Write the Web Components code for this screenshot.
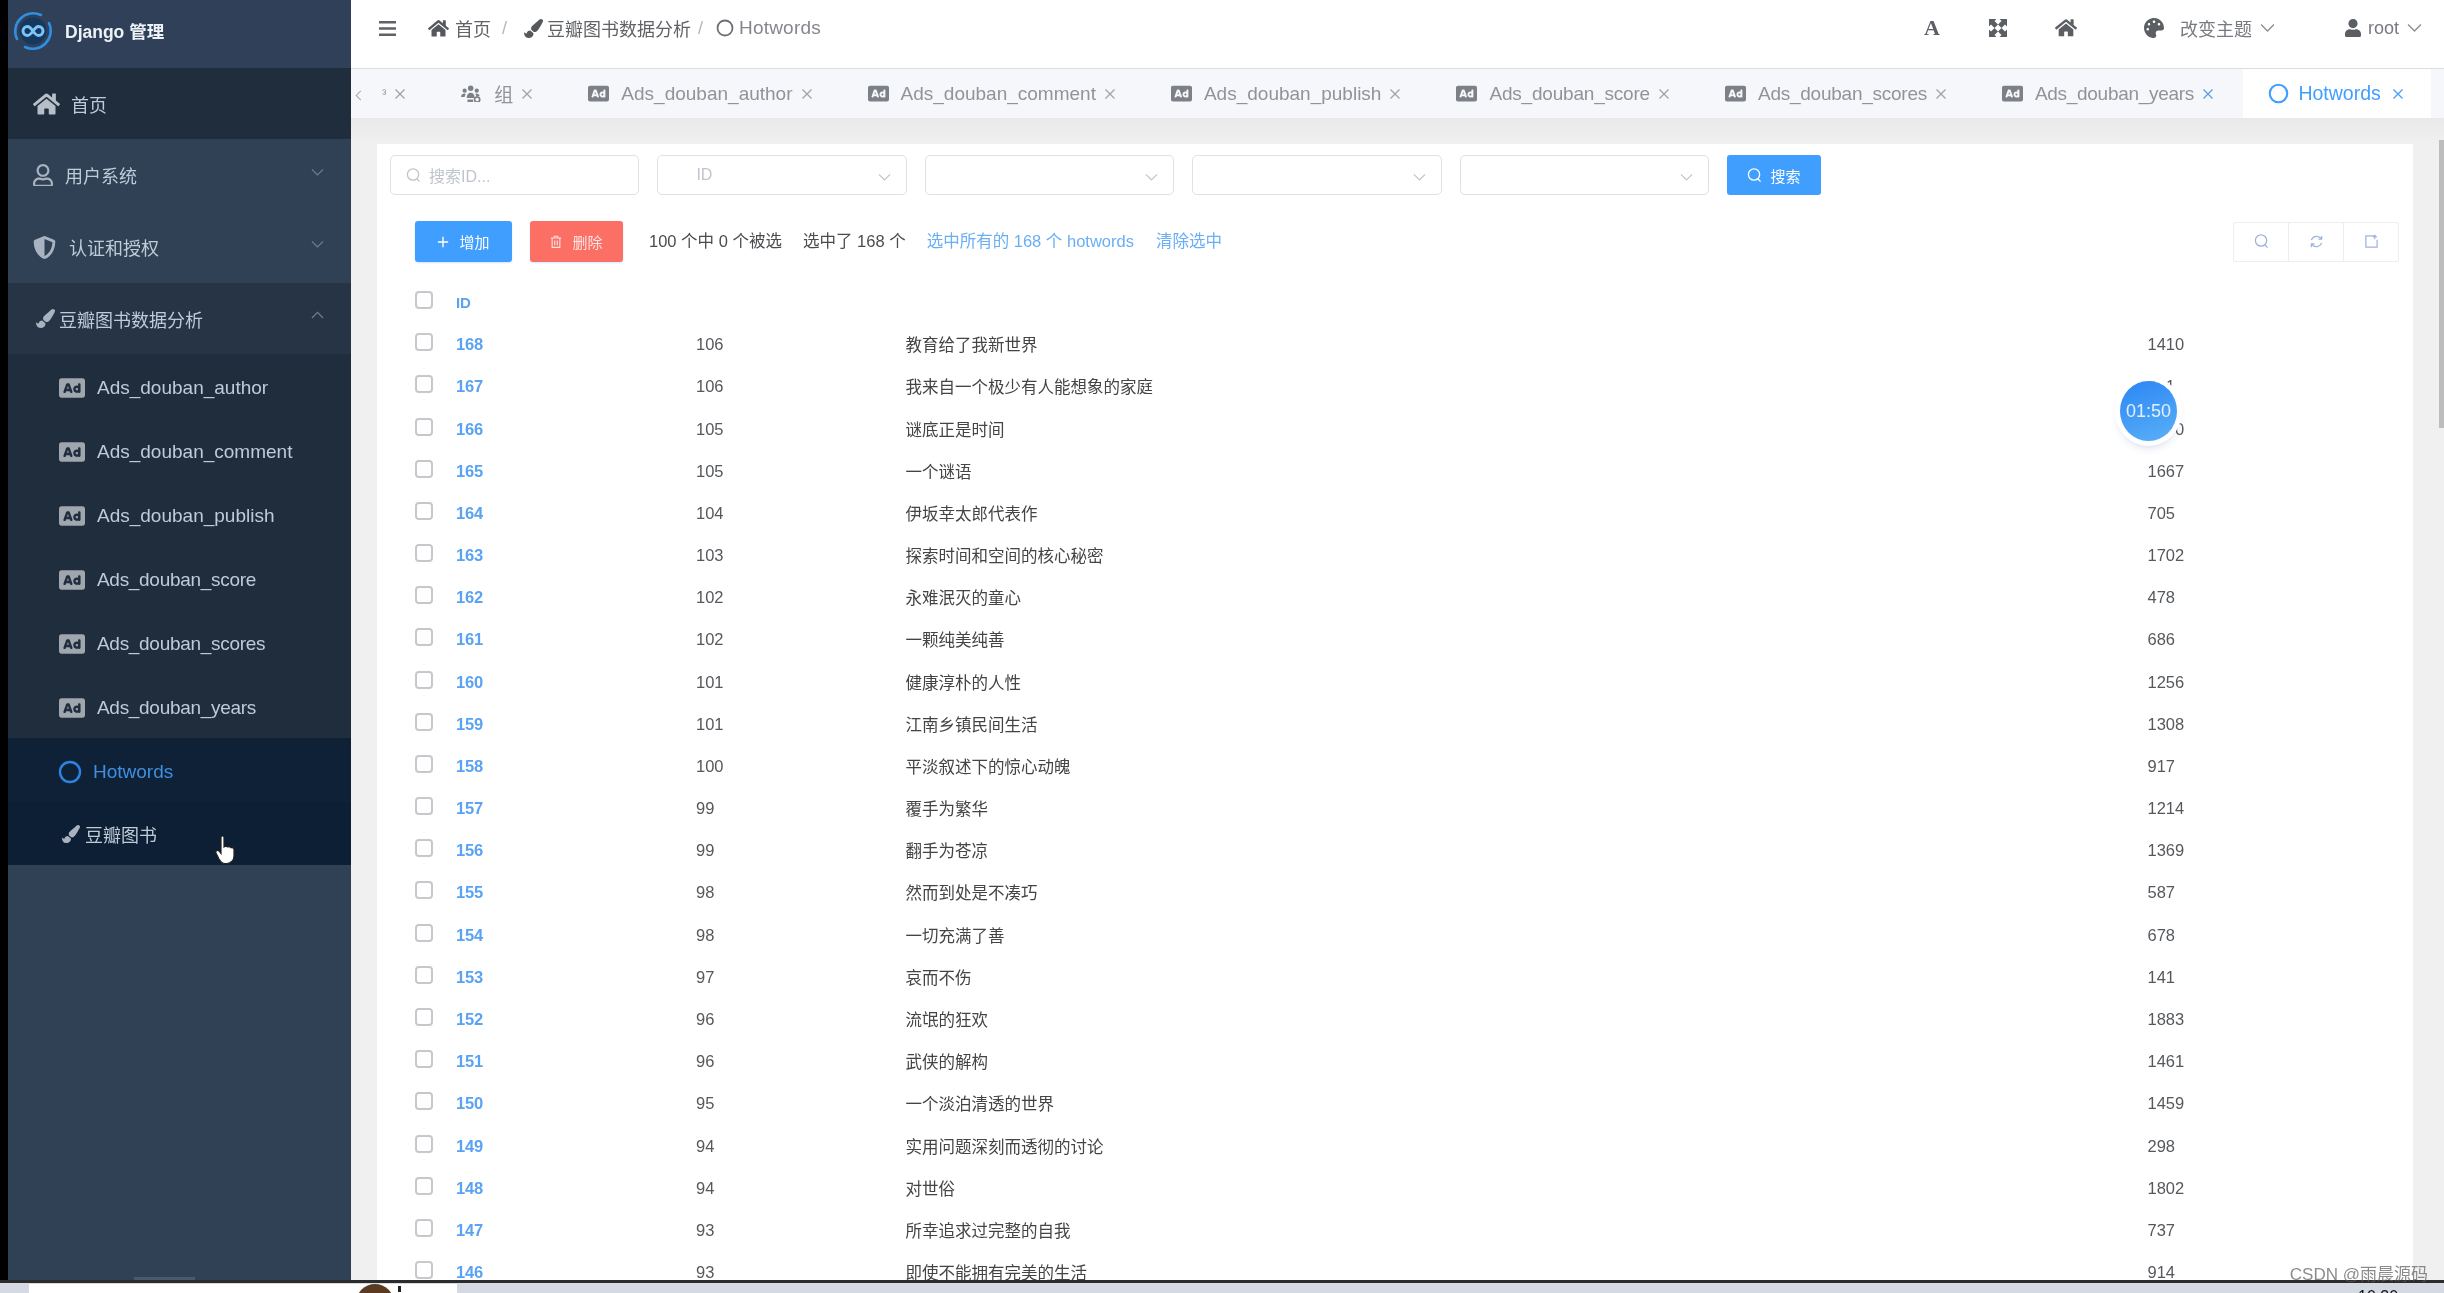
<!DOCTYPE html>
<html lang="zh">
<head>
<meta charset="utf-8">
<title>Hotwords | Django 管理</title>
<style>
  html, body { margin: 0; height: 100%; background: #d8dce4; overflow: hidden; }
  body { font-family: "Liberation Sans", "Noto Sans CJK SC", sans-serif; }
</style>
</head>
<body>
<admin-app></admin-app>

<script>
const ICONS = {
  home: ["0 0 576 512", `<path d="M280.37 148.26L96 300.11V464a16 16 0 0 0 16 16l112.06-.29a16 16 0 0 0 15.92-16V368a16 16 0 0 1 16-16h64a16 16 0 0 1 16 16v95.64a16 16 0 0 0 16 16.05L464 480a16 16 0 0 0 16-16V300L295.67 148.26a12.19 12.19 0 0 0-15.3 0zM571.6 251.47L488 182.56V44.05a12 12 0 0 0-12-12h-56a12 12 0 0 0-12 12v72.61L318.47 43a48 48 0 0 0-61 0L4.34 251.47a12 12 0 0 0-1.6 16.9l25.5 31A12 12 0 0 0 45.15 301l235.22-193.74a12.19 12.19 0 0 1 15.3 0L530.9 301a12 12 0 0 0 16.9-1.6l25.5-31a12 12 0 0 0-1.7-16.93z"/>`],
  brush: ["0 0 512 512", `<path d="M167.02 309.34c-40.12 2.58-76.53 17.86-97.19 72.3-2.35 6.21-8 9.98-14.59 9.98-11.11 0-45.46-27.67-55.25-34.35C0 439.62 37.93 512 128 512c75.86 0 128-43.77 128-120.19 0-3.11-.65-6.08-.97-9.13l-88.01-73.34zM457.89 0c-15.16 0-29.37 6.71-40.21 16.45C213.27 199.05 192 203.34 192 257.09c0 13.7 3.25 26.76 8.73 38.7l63.82 53.18c7.21 1.8 14.64 3.03 22.39 3.03 62.11 0 98.11-45.47 211.16-256.46 7.38-14.35 13.9-29.85 13.9-45.99C512 20.64 486 0 457.89 0z"/>`],
  ad: ["0 0 512 512", `<path d="M157.52 272h36.96L176 218.78 157.52 272zM352 256c-13.23 0-24 10.77-24 24s10.77 24 24 24 24-10.77 24-24-10.77-24-24-24zM464 64H48C21.5 64 0 85.5 0 112v288c0 26.5 21.5 48 48 48h416c26.5 0 48-21.5 48-48V112c0-26.5-21.5-48-48-48zM250.58 352h-16.94c-6.81 0-12.88-4.32-15.12-10.75L211.15 320h-70.29l-7.38 21.25A16 16 0 0 1 118.36 352h-16.94c-11.01 0-18.73-10.85-15.12-21.25L140 176.12A23.995 23.995 0 0 1 162.67 160h26.66A23.99 23.99 0 0 1 212 176.13l53.69 154.62c3.61 10.4-4.11 21.25-15.11 21.25zM424 336c0 8.84-7.16 16-16 16h-16c-4.85 0-9.04-2.27-11.98-5.68-8.62 3.66-18.09 5.68-28.02 5.68-39.7 0-72-32.3-72-72s32.3-72 72-72c8.46 0 16.46 1.73 24 4.42V176c0-8.84 7.16-16 16-16h16c8.84 0 16 7.16 16 16v160z"/>`],
  user: ["0 0 448 512", `<path d="M224 256c70.7 0 128-57.3 128-128S294.7 0 224 0 96 57.3 96 128s57.3 128 128 128zm89.6 32h-16.7c-22.2 10.2-46.9 16-72.9 16s-50.6-5.8-72.9-16h-16.7C60.2 288 0 348.2 0 422.4V464c0 26.5 21.5 48 48 48h352c26.5 0 48-21.5 48-48v-41.6c0-74.2-60.2-134.4-134.4-134.4z"/>`],
  userline: ["0 0 448 512", `<path d="M313.6 304c-28.7 0-42.5 16-89.6 16-47.1 0-60.8-16-89.6-16C60.2 304 0 364.2 0 438.4V464c0 26.5 21.5 48 48 48h352c26.5 0 48-21.5 48-48v-25.6c0-74.2-60.2-134.4-134.4-134.4zM400 464H48v-25.6c0-47.6 38.8-86.4 86.4-86.4 14.6 0 38.3 16 89.6 16 51.7 0 74.9-16 89.6-16 47.6 0 86.4 38.8 86.4 86.4V464zM224 288c79.5 0 144-64.5 144-144S303.5 0 224 0 80 64.5 80 144s64.5 144 144 144zm0-240c52.9 0 96 43.1 96 96s-43.1 96-96 96-96-43.1-96-96 43.1-96 96-96z"/>`],
  shield: ["0 0 512 512", `<path d="M466.5 83.7l-192-80a48.15 48.15 0 0 0-36.9 0l-192 80C27.7 91.1 16 108.6 16 128c0 198.5 114.5 335.7 221.5 380.3 11.8 4.9 25.1 4.9 36.9 0C360.1 472.6 496 349.3 496 128c0-19.4-11.7-36.9-29.5-44.3zM256.1 446.3l-.1-381 175.9 73.3c-3.3 151.4-82.1 261.1-175.8 307.7z"/>`],
  palette: ["0 0 512 512", `<path d="M204.3 5C104.9 24.4 24.8 104.3 5.2 203.4c-37 187 131.7 326.4 258.8 306.7 41.2-6.4 61.4-54.6 42.5-91.7-23.1-45.4 9.9-98.4 60.9-98.4h79.7c35.8 0 64.8-29.6 64.9-65.3C511.5 97.1 368.1-26.9 204.3 5zM96 320c-17.7 0-32-14.3-32-32s14.3-32 32-32 32 14.3 32 32-14.3 32-32 32zm32-128c-17.7 0-32-14.3-32-32s14.3-32 32-32 32 14.3 32 32-14.3 32-32 32zm128-64c-17.7 0-32-14.3-32-32s14.3-32 32-32 32 14.3 32 32-14.3 32-32 32zm128 64c-17.7 0-32-14.3-32-32s14.3-32 32-32 32 14.3 32 32-14.3 32-32 32z"/>`],
  expand: ["0 0 18 18", `<path d="M0 0h7.500L5.500 2l3.500 3.500L5.500 9 2 5.500 0 7.500zM18 0v7.500l-2-2L12.500 9 9 5.500 12.500 2l-2-2zM0 18v-7.500l2 2L5.500 9 9 12.500 5.500 16l2 2zM18 18h-7.500l2-2L9 12.500 12.500 9l3.500 3.500 2-2z"/>`],
  group: ["0 0 26 22", `<circle cx="12" cy="4" r="3.400"/><circle cx="4.500" cy="7" r="2.600"/><circle cx="19.500" cy="7" r="2.600"/><path d="M7 16c0-4 2-6.500 5-6.500s5 2.500 5 6.500zM0 15c0-3 2-4.500 4-4.500 1 0 1.500.3 2 .7-1 1-1.400 2.300-1.500 3.800zM19 10.500c2 0 4 1.500 4 3l-4 1.500c0-1.500-.5-3-1.400-3.800.4-.4.900-.7 1.400-.7z"/><circle cx="20" cy="18" r="3.200" fill="none" stroke="currentColor" stroke-width="2"/><path d="M8 18h7v3H8z"/>`],
  logo: ["0 0 40 40", `<circle cx="20" cy="20" r="13.500" fill="#15385f"/><path d="M4 28A18 18 0 0 1 28 4M36 12a18 18 0 0 1-24 24" fill="none" stroke="#2f8ee0" stroke-width="2.600" stroke-linecap="round"/><path d="M20 20c-2.500-3.500-3.600-4.500-5.500-4.500a4.500 4.500 0 0 0 0 9c1.900 0 3-1 5.500-4.500s3.600-4.500 5.500-4.500a4.500 4.500 0 0 1 0 9c-1.900 0-3-1-5.500-4.500z" fill="none" stroke="#7cc4f7" stroke-width="3"/>`],
  chevdown: ["0 0 14 9", `<path d="M1 1.500l6 6 6-6" fill="none" stroke="currentColor" stroke-width="1.300"/>`],
  chevup: ["0 0 14 9", `<path d="M1 7.500l6-6 6 6" fill="none" stroke="currentColor" stroke-width="1.300"/>`],
  chevleft: ["0 0 9 14", `<path d="M7.500 1l-6 6 6 6" fill="none" stroke="currentColor" stroke-width="1.300"/>`],
  ring: ["0 0 24 24", `<circle cx="12" cy="12" r="10" fill="none" stroke="currentColor" stroke-width="2.400"/>`],
  close: ["0 0 12 12", `<path d="M1.500 1.500l9 9M10.500 1.500l-9 9" fill="none" stroke="currentColor" stroke-width="1.300"/>`],
  bars: ["0 0 17 15", `<path d="M0 0h17v2.600H0zM0 6.200h17v2.600H0zM0 12.400h17V15H0z"/>`],
  search: ["0 0 16 16", `<circle cx="7.500" cy="7" r="6" fill="none" stroke="currentColor" stroke-width="1.400"/><path d="M11.500 11.500l3 3" stroke="currentColor" stroke-width="1.400"/>`],
  plus: ["0 0 14 14", `<path d="M7 1v12M1 7h12" stroke="currentColor" stroke-width="1.600"/>`],
  trash: ["0 0 14 16", `<path d="M1 3.500h12M5 3V1.500h4V3M2.500 3.500v11h9v-11M5.500 6.500v5.500M8.500 6.500v5.500" fill="none" stroke="currentColor" stroke-width="1.300"/>`],
  refresh: ["0 0 16 16", `<path d="M13 5A6 6 0 0 0 2.500 6.500M3 11a6 6 0 0 0 10.500-1.500M13.500 2v3.500H10M2.500 14v-3.500H6" fill="none" stroke="currentColor" stroke-width="1.300"/>`],
  columns: ["0 0 16 16", `<path d="M10 2H2v12h12V6M11.500 1v4.500M9.500 3.500l2-2 2 2" fill="none" stroke="currentColor" stroke-width="1.300"/>`],
  hand: ["0 0 22 30", `<path d="M6 2.500c0-2 3-2 3 0V12l1-.5c1.500-.5 2.500 0 3 .5 1-.5 2.500-.3 3 .7 1.500-.5 3 .3 3 2V21c0 4-3 7.500-7 7.500H10c-3 0-4.500-2-6-4.500L1 18c-1-2 1.500-3.500 3-2l2 2.500z" fill="#fff" stroke="#222" stroke-width="1.200"/>`],
};

class FaIcon extends HTMLElement {
  connectedCallback() {
    if (this.shadowRoot) return;
    const [box, inner] = ICONS[this.getAttribute("name")];
    this.attachShadow({ mode: "open" }).innerHTML = /*html*/ `
      <style>
        :host { display: inline-block; flex: none; line-height: 0; }
        svg { display: block; width: 100%; height: auto; fill: currentColor; }
      </style>
      <svg viewBox="${box}" xmlns="http://www.w3.org/2000/svg">${inner}</svg>`;
    this.style.width = (this.getAttribute("size") || 20) + "px";
  }
}
customElements.define("fa-icon", FaIcon);

// sidebar row: pad = left offset of the icon, gap = space between icon and label
class SideItem extends HTMLElement {
  connectedCallback() {
    if (this.shadowRoot) return;
    const a = (n, d) => this.getAttribute(n) ?? d;
    const chev = a("chev", "");
    this.attachShadow({ mode: "open" }).innerHTML = /*html*/ `
      <style>
        :host {
          display: flex;
          align-items: center;
          box-sizing: border-box;
          height: ${a("h", 64)}px;
          padding: ${a("pt", 0)}px 27px 0 ${a("pad", 50)}px;
          background: ${a("bg", "transparent")};
          color: ${a("color", "#bfcbd9")};
          font-size: ${a("fs", 18)}px;
          letter-spacing: ${a("ls", 0)}px;
        }
        fa-icon { margin-right: ${a("gap", 12)}px; color: ${a("ic", "#a9b3bf")}; }
        .chev { margin: -6px 0 0 auto; color: #6f7f92; }
      </style>
      <fa-icon name="${a("icon")}" size="${a("size", 26)}"></fa-icon>
      <slot></slot>
      ${chev ? `<fa-icon class="chev" name="${chev}" size="13"></fa-icon>` : ""}`;
  }
}
customElements.define("side-item", SideItem);

const sideTpl = document.createElement("template");
sideTpl.innerHTML = /*html*/ `
  <style>
    :host {
      display: block;
      flex: none;
      width: 343px;
      background: #304156;
      position: relative;
      color: #bfcbd9;
      font-family: "Liberation Sans", "Noto Sans CJK SC", sans-serif;
    }
    .brand {
      display: flex;
      align-items: center;
      box-sizing: border-box;
      height: 68px;
      padding: 0 0 7px 5px;
      gap: 12px;
      color: #eef2f6;
      font-size: 17.500px;
      font-weight: 700;
      background: #2f4058;
    }
    .hand { position: absolute; left: 207px; top: 835px; }
    .nub { position: absolute; left: 126px; bottom: 0; width: 61px; height: 3px; background: #4a5a6c; }
  </style>
  <div class="brand"><fa-icon name="logo" size="40"></fa-icon><span>Django 管理</span></div>
  <side-item icon="home" size="27" pad="25" gap="11" h="71" bg="#1f2d3d" ic="#b6bec8">首页</side-item>
  <side-item icon="userline" size="20" pad="25" gap="12" h="72" chev="chevdown">用户系统</side-item>
  <side-item icon="shield" size="23" pad="25" gap="13" h="72" chev="chevdown">认证和授权</side-item>
  <side-item icon="brush" size="19" pad="28" gap="4" h="71" bg="#263445" chev="chevup">豆瓣图书数据分析</side-item>
  <side-item icon="ad" size="26" pad="51" gap="12" pt="3" bg="#1f2d3d" fs="19" ic="#a0a6ae">Ads_douban_author</side-item>
  <side-item icon="ad" size="26" pad="51" gap="12" pt="3" bg="#1f2d3d" fs="19" ic="#a0a6ae">Ads_douban_comment</side-item>
  <side-item icon="ad" size="26" pad="51" gap="12" pt="3" bg="#1f2d3d" fs="19" ic="#a0a6ae">Ads_douban_publish</side-item>
  <side-item icon="ad" size="26" pad="51" gap="12" pt="3" bg="#1f2d3d" fs="19" ic="#a0a6ae" ls="-.3">Ads_douban_score</side-item>
  <side-item icon="ad" size="26" pad="51" gap="12" pt="3" bg="#1f2d3d" fs="19" ic="#a0a6ae" ls="-.3">Ads_douban_scores</side-item>
  <side-item icon="ad" size="26" pad="51" gap="12" pt="3" bg="#1f2d3d" fs="19" ic="#a0a6ae" ls="-.3">Ads_douban_years</side-item>
  <side-item icon="ring" size="24" pad="50" gap="11" pt="3" bg="#0f2136" color="#3f8fe0" ic="#2f83e0" fs="19">Hotwords</side-item>
  <side-item icon="brush" size="18" pad="54" gap="5" h="63" bg="#0d1f35">豆瓣图书</side-item>
  <fa-icon class="hand" name="hand" size="22"></fa-icon>
  <div class="nub"></div>
`;
class SideBar extends HTMLElement {
  constructor() {
    super();
    this.attachShadow({ mode: "open" }).appendChild(sideTpl.content.cloneNode(true));
  }
}
customElements.define("side-bar", SideBar);

const topTpl = document.createElement("template");
topTpl.innerHTML = /*html*/ `
  <style>
    :host {
      display: flex;
      align-items: center;
      flex: none;
      box-sizing: border-box;
      height: 69px;
      padding: 0 22px 12px 28px;
      background: #fff;
      border-bottom: 1px solid #dcdde0;
      color: #606266;
      font-size: 18px;
    }
    .crumbs { display: flex; align-items: center; margin-left: 32px; }
    .sep { color: #b5b8be; }
    .last { color: #84878d; font-size: 19px; letter-spacing: .2px; }
    .tools { display: flex; align-items: center; margin-left: auto; color: #5b5e63; }
    .a { font: 700 22px "Liberation Serif", serif; color: #5b5e63; width: 17px; line-height: 1; }
    .t { color: #777a80; }
  </style>
  <fa-icon name="bars" size="17"></fa-icon>
  <div class="crumbs">
    <fa-icon name="home" size="21" style="color:#55585d"></fa-icon>
    <span style="margin-left:6px">首页</span>
    <span class="sep" style="margin:0 17px 0 11px">/</span>
    <fa-icon name="brush" size="19" style="color:#55585d"></fa-icon>
    <span style="margin-left:4px">豆瓣图书数据分析</span>
    <span class="sep" style="margin:0 13px 0 7px">/</span>
    <fa-icon name="ring" size="18" style="color:#6d7076"></fa-icon>
    <span class="last" style="margin-left:5px">Hotwords</span>
  </div>
  <div class="tools">
    <span class="a">A</span>
    <fa-icon name="expand" size="18" style="margin-left:48px"></fa-icon>
    <fa-icon name="home" size="22" style="margin-left:48px"></fa-icon>
    <fa-icon name="palette" size="20" style="margin-left:67px"></fa-icon>
    <span class="t" style="margin-left:16px">改变主题</span>
    <fa-icon name="chevdown" size="15" style="margin-left:8px;color:#8b8e94"></fa-icon>
    <fa-icon name="user" size="16" style="margin-left:70px"></fa-icon>
    <span class="t" style="margin-left:7px">root</span>
    <fa-icon name="chevdown" size="15" style="margin-left:8px;color:#8b8e94"></fa-icon>
  </div>
`;
class TopBar extends HTMLElement {
  constructor() {
    super();
    this.attachShadow({ mode: "open" }).appendChild(topTpl.content.cloneNode(true));
  }
}
customElements.define("top-bar", TopBar);

class TagTab extends HTMLElement {
  connectedCallback() {
    if (this.shadowRoot) return;
    const active = this.hasAttribute("active");
    const icon = this.getAttribute("icon");
    this.attachShadow({ mode: "open" }).innerHTML = /*html*/ `
      <style>
        :host {
          display: flex;
          align-items: center;
          flex: none;
          box-sizing: border-box;
          height: 100%;
          padding: 0 27.500px 0 ${active ? 25 : 27.5}px;
          color: ${active ? "#409eff" : "#909399"};
          background: ${active ? "#fff" : "transparent"};
          font-size: ${active ? 19.5 : 19}px;
          letter-spacing: ${this.getAttribute("ls") || 0}px;
        }
        .ic { margin-right: ${active ? 9 : 12}px; color: ${active ? "#409eff" : "#7d8086"}; }
        .x { margin-left: ${active ? 11 : 8}px; color: ${this.getAttribute("xc") || (active ? "#409eff" : "#a0a3a8")}; }
      </style>
      ${icon ? `<fa-icon class="ic" name="${icon}" size="21"></fa-icon>` : ""}
      <slot></slot>
      <fa-icon class="x" name="close" size="12"></fa-icon>`;
  }
}
customElements.define("tag-tab", TagTab);

const tagsTpl = document.createElement("template");
tagsTpl.innerHTML = /*html*/ `
  <style>
    :host {
      display: flex;
      align-items: center;
      flex: none;
      height: 49px;
      padding-left: 4px;
      background: #f5f7fa;
      overflow: hidden;
    }
    .arrow { color: #a6a9ae; flex: none; margin-top: 4px; }
    .stub { margin-left: 20px; align-self: stretch; height: auto; }
    .on { margin-left: 2px; }
  </style>
  <fa-icon class="arrow" name="chevleft" size="7"></fa-icon>
  <tag-tab class="stub" style="padding-left:0;font-size:13px">³</tag-tab>
  <tag-tab icon="group">组</tag-tab>
  <tag-tab icon="ad">Ads_douban_author</tag-tab>
  <tag-tab icon="ad">Ads_douban_comment</tag-tab>
  <tag-tab icon="ad">Ads_douban_publish</tag-tab>
  <tag-tab icon="ad" ls="-.2">Ads_douban_score</tag-tab>
  <tag-tab icon="ad" ls="-.25">Ads_douban_scores</tag-tab>
  <tag-tab icon="ad" ls="-.3" xc="#5c9ee8">Ads_douban_years</tag-tab>
  <tag-tab class="on" icon="ring" active>Hotwords</tag-tab>
`;
class TagBar extends HTMLElement {
  constructor() {
    super();
    this.attachShadow({ mode: "open" }).appendChild(tagsTpl.content.cloneNode(true));
  }
}
customElements.define("tag-bar", TagBar);

const filterTpl = document.createElement("template");
filterTpl.innerHTML = /*html*/ `
  <style>
    :host { display: flex; gap: 18px; height: 40px; padding: 11px 0 0 13px; color: #c0c4cc; font-size: 16px; }
    .f {
      flex: none;
      display: flex;
      align-items: center;
      box-sizing: border-box;
      width: 249.400px;
      padding: 0 15px;
      background: #fff;
      border: 1.500px solid #dfe1e6;
      border-radius: 5px;
    }
    .f fa-icon { color: #c0c4cc; }
    .f .ch { margin: 4px 0 0 auto; }
    .btn {
      flex: none;
      display: flex;
      align-items: center;
      justify-content: center;
      gap: 8px;
      width: 94px;
      border-radius: 3px;
      background: #409eff;
      color: #fff;
      font-size: 15px;
    }
  </style>
  <div class="f"><fa-icon name="search" size="15"></fa-icon><span style="margin-left:8px">搜索ID...</span></div>
  <div class="f"><span style="margin-left:23px">ID</span><fa-icon class="ch" name="chevdown" size="13"></fa-icon></div>
  <div class="f"><fa-icon class="ch" name="chevdown" size="13"></fa-icon></div>
  <div class="f"><fa-icon class="ch" name="chevdown" size="13"></fa-icon></div>
  <div class="f"><fa-icon class="ch" name="chevdown" size="13"></fa-icon></div>
  <div class="btn"><fa-icon name="search" size="15"></fa-icon>搜索</div>
`;
class FilterBar extends HTMLElement {
  constructor() {
    super();
    this.attachShadow({ mode: "open" }).appendChild(filterTpl.content.cloneNode(true));
  }
}
customElements.define("filter-bar", FilterBar);

const actionTpl = document.createElement("template");
actionTpl.innerHTML = /*html*/ `
  <style>
    :host {
      display: flex;
      align-items: center;
      height: 41px;
      margin-top: 26px;
      padding: 0 14px 0 38px;
      color: #4a4c50;
      font-size: 16.500px;
    }
    span, a { margin-top: -3px; }
    .btn {
      display: flex;
      align-items: center;
      justify-content: center;
      gap: 10px;
      height: 41px;
      border-radius: 3px;
      color: #fff;
      font-size: 15px;
      box-shadow: 0 1px 2px rgba(64, 158, 255, .25);
    }
    .add { width: 97px; background: #409eff; }
    .del { width: 93px; margin-left: 18px; background: #fb6f65; color: #ffe3e0; }
    a { color: #6aaef5; }
    .tools { display: flex; margin-left: auto; height: 38px; border: 1px solid #eceef2; border-radius: 2px; color: #9fb4d8; }
    .tools div { display: flex; align-items: center; justify-content: center; width: 54px; }
    .tools div + div { border-left: 1px solid #eceef2; }
  </style>
  <div class="btn add"><fa-icon name="plus" size="12"></fa-icon>增加</div>
  <div class="btn del"><fa-icon name="trash" size="12"></fa-icon>删除</div>
  <span style="margin-left:26px">100 个中 0 个被选</span>
  <span style="margin-left:21px">选中了 168 个</span>
  <a style="margin-left:21px">选中所有的 168 个 hotwords</a>
  <a style="margin-left:22px">清除选中</a>
  <div class="tools">
    <div><fa-icon name="search" size="15"></fa-icon></div>
    <div><fa-icon name="refresh" size="15"></fa-icon></div>
    <div><fa-icon name="columns" size="15"></fa-icon></div>
  </div>
`;
class ActionBar extends HTMLElement {
  constructor() {
    super();
    this.attachShadow({ mode: "open" }).appendChild(actionTpl.content.cloneNode(true));
  }
}
customElements.define("action-bar", ActionBar);

const ROWS = [
  [168, 106, "教育给了我新世界", 1410],
  [167, 106, "我来自一个极少有人能想象的家庭", 681],
  [166, 105, "谜底正是时间", 1350],
  [165, 105, "一个谜语", 1667],
  [164, 104, "伊坂幸太郎代表作", 705],
  [163, 103, "探索时间和空间的核心秘密", 1702],
  [162, 102, "永难泯灭的童心", 478],
  [161, 102, "一颗纯美纯善", 686],
  [160, 101, "健康淳朴的人性", 1256],
  [159, 101, "江南乡镇民间生活", 1308],
  [158, 100, "平淡叙述下的惊心动魄", 917],
  [157, 99, "覆手为繁华", 1214],
  [156, 99, "翻手为苍凉", 1369],
  [155, 98, "然而到处是不凑巧", 587],
  [154, 98, "一切充满了善", 678],
  [153, 97, "哀而不伤", 141],
  [152, 96, "流氓的狂欢", 1883],
  [151, 96, "武侠的解构", 1461],
  [150, 95, "一个淡泊清透的世界", 1459],
  [149, 94, "实用问题深刻而透彻的讨论", 298],
  [148, 94, "对世俗", 1802],
  [147, 93, "所幸追求过完整的自我", 737],
  [146, 93, "即使不能拥有完美的生活", 914],
];

class DataTable extends HTMLElement {
  constructor() {
    super();
    const cells = ROWS.map(([id, num, word, count]) => /*html*/ `
      <i></i><a>${id}</a><span>${num}</span><span class="w">${word}</span><span>${count}</span>`).join("");
    this.attachShadow({ mode: "open" }).innerHTML = /*html*/ `
      <style>
        :host {
          display: grid;
          grid-template-columns: 41px 240px 209.500px 1242px 1fr;
          grid-auto-rows: 42.180px;
          align-items: center;
          margin: 19.500px 0 0 38px;
          color: #55585c;
          font-size: 16.500px;
        }
        i {
          display: block;
          box-sizing: border-box;
          width: 18px;
          height: 18px;
          margin-top: -5px;
          border: 2px solid #c6c8cc;
          border-radius: 4px;
        }
        a { color: #5aa3f2; font-weight: 700; letter-spacing: -.2px; }
        .h { font-size: 15px; }
        .w { color: #444; margin-top: -1px; }
      </style>
      <i></i><a class="h">ID</a><span></span><span></span><span></span>
      ${cells}`;
  }
}
customElements.define("data-table", DataTable);

const timerTpl = document.createElement("template");
timerTpl.innerHTML = /*html*/ `
  <style>
    :host {
      position: absolute;
      left: 1743px;
      top: 237px;
      display: flex;
      align-items: center;
      justify-content: center;
      width: 57px;
      height: 60px;
      border-radius: 50%;
      background: linear-gradient(160deg, #2b86f5, #5ab0f7);
      color: #dff0ff;
      font-size: 18px;
      box-shadow: 0 0 0 5px #fff, 0 5px 10px rgba(60, 100, 160, .3);
    }
  </style>
  <slot></slot>
`;
class TimerBadge extends HTMLElement {
  constructor() {
    super();
    this.attachShadow({ mode: "open" }).appendChild(timerTpl.content.cloneNode(true));
  }
}
customElements.define("timer-badge", TimerBadge);

const contentTpl = document.createElement("template");
contentTpl.innerHTML = /*html*/ `
  <style>
    :host {
      display: block;
      flex: 1;
      min-height: 0;
      position: relative;
      padding: 26px 31px 0 26px;
      background: linear-gradient(#e9e9e9, #f0f0f0 26px);
      overflow: hidden;
    }
    .card { position: relative; height: 100%; background: #fff; overflow: hidden; }
    .thumb { position: absolute; right: 0; top: 22px; width: 5px; height: 288px; background: #bdbdbd; }
  </style>
  <div class="card">
    <filter-bar></filter-bar>
    <action-bar></action-bar>
    <data-table></data-table>
    <timer-badge>01:50</timer-badge>
  </div>
  <div class="thumb"></div>
`;
class ContentPane extends HTMLElement {
  constructor() {
    super();
    this.attachShadow({ mode: "open" }).appendChild(contentTpl.content.cloneNode(true));
  }
}
customElements.define("content-pane", ContentPane);

const stripTpl = document.createElement("template");
stripTpl.innerHTML = /*html*/ `
  <style>
    :host {
      display: flex;
      flex: none;
      box-sizing: border-box;
      height: 13px;
      border-top: 3px solid #2c2c2c;
      background: #d5d9e2;
      overflow: hidden;
      position: relative;
    }
    .box { display: flex; width: 428px; margin: 1px 0 0 29px; background: #fff; }
    .avatar { width: 38px; height: 38px; margin-left: 327px; border-radius: 50%; background: #5b3a22; }
    .dot { width: 3px; height: 6px; margin: 2px 0 0 4px; background: #222; }
    .clock { position: absolute; left: 2358px; top: 6px; font-size: 16px; line-height: 1; color: #111; }
  </style>
  <div class="box"><div class="avatar"></div><div class="dot"></div></div>
  <span class="clock">10:30</span>
`;
class TaskStrip extends HTMLElement {
  constructor() {
    super();
    this.attachShadow({ mode: "open" }).appendChild(stripTpl.content.cloneNode(true));
  }
}
customElements.define("task-strip", TaskStrip);

const appTpl = document.createElement("template");
appTpl.innerHTML = /*html*/ `
  <style>
    :host {
      display: flex;
      flex-direction: column;
      height: 1293px;
      position: relative;
      filter: blur(.6px);
      font-family: "Liberation Sans", "Noto Sans CJK SC", sans-serif;
    }
    .shell { display: flex; flex: 1; min-height: 0; padding-left: 8px; background: #000; overflow: hidden; }
    .main { display: flex; flex-direction: column; flex: 1; min-width: 0; background: #fff; }
    .mark {
      position: absolute;
      right: 16px;
      bottom: 8px;
      color: rgba(90, 90, 90, .7);
      font-size: 17px;
      line-height: 20px;
    }
  </style>
  <div class="shell">
    <side-bar></side-bar>
    <div class="main">
      <top-bar></top-bar>
      <tag-bar></tag-bar>
      <content-pane></content-pane>
    </div>
  </div>
  <task-strip></task-strip>
  <span class="mark">CSDN @雨晨源码</span>
`;
class AdminApp extends HTMLElement {
  constructor() {
    super();
    this.attachShadow({ mode: "open" }).appendChild(appTpl.content.cloneNode(true));
  }
}
customElements.define("admin-app", AdminApp);
</script>
</body>
</html>
